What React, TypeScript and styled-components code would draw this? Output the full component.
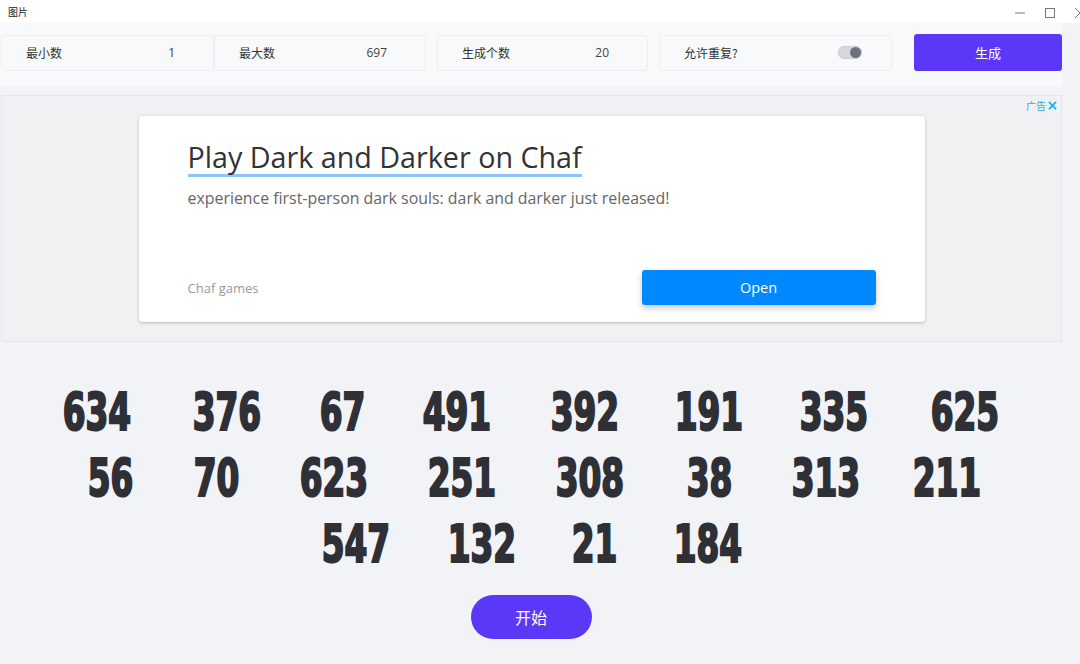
import styled, { createGlobalStyle } from 'styled-components';
import { FunctionComponent } from 'react';

const GlobalStyle = createGlobalStyle`
  html, body {
    margin: 0;
    padding: 0;
    background: #f2f3f7;
    font-family: "Noto Sans CJK SC", "Noto Sans", sans-serif;
  }
`

const TitleBar = styled.div`
  height: 23px;
  background: #fff;
  display: flex;
  align-items: center;
  justify-content: space-between;
  padding-left: 8px;
  font-size: 10px;
  color: #222;
`
const WindowControls = styled.div`
  display: flex;
  align-items: center;
  gap: 18px;
  margin-right: -6px;
  height: 100%;
  align-self: flex-start;
  padding-top: 1px;
`

const Page = styled.div`
  width: 1062px;
`

const Toolbar = styled.div`
  background: #f8f9fb;
  display: flex;
  align-items: center;
  padding: 11px 0 16px 1px;
  gap: 11px;
`
const FieldGroup = styled.div`
  display: flex;
`
const Field = styled.div<{ $width: number }>`
  width: ${p => p.$width}px;
  height: 36px;
  box-sizing: border-box;
  border: 1px solid #eceef2;
  border-radius: 3px;
  background: #f8f9fb;
  display: flex;
  align-items: center;
  justify-content: space-between;
  padding: 0 38px 0 24px;
  font-size: 12px;
  color: #333;
`
const FieldValue = styled.span`
  color: #444;
  font-family: "Open Sans", sans-serif;
`
const Toggle = styled.span`
  width: 22px;
  height: 11px;
  border-radius: 6px;
  background: #d6d8dd;
  border: 1px solid #c9ccd2;
  position: relative;
  margin-right: -9px;
  &::after {
    content: '';
    position: absolute;
    right: 0;
    top: 0;
    width: 11px;
    height: 11px;
    border-radius: 50%;
    background: #6d717c;
  }
`
const GenerateButton = styled.button`
  margin-left: 11px;
  width: 148px;
  height: 37px;
  border: none;
  border-radius: 3px;
  background: #5b37f8;
  color: #fff;
  font-size: 13px;
  font-family: inherit;
`

const AdArea = styled.div`
  margin: 8px 0 0 1px;
  height: 247px;
  box-sizing: border-box;
  background: #f1f1f3;
  border: 1px solid #e5e6ea;
  position: relative;
  padding-top: 20px;
`
const AdMark = styled.div`
  position: absolute;
  right: 4px;
  top: 2px;
  font-size: 10px;
  color: #19b0e0;
  display: flex;
  align-items: center;
  gap: 2px;
`
const AdCard = styled.div`
  width: 786px;
  height: 206px;
  margin: 0 auto;
  background: #fff;
  border-radius: 3px;
  box-shadow: 0 1px 3px rgba(0, 0, 0, 0.25);
  box-sizing: border-box;
  padding: 24px 49px 0 49px;
  font-family: "Open Sans", sans-serif;
  display: flex;
  flex-direction: column;
`
const AdTitle = styled.div`
  font-size: 28.7px;
  color: #333;
  align-self: flex-start;
  border-bottom: 3px solid #8ac4f8;
  line-height: 34px;
`
const AdText = styled.div`
  font-size: 15.9px;
  color: #666;
  margin-top: 10px;
`
const AdFooter = styled.div`
  margin-top: auto;
  margin-bottom: 17px;
  display: flex;
  align-items: center;
  justify-content: space-between;
`
const AdBrand = styled.span`
  font-size: 13px;
  color: #999;
`
const OpenButton = styled.button`
  width: 234px;
  height: 35px;
  border: none;
  border-radius: 3px;
  background: #0088ff;
  color: #fff;
  font-size: 14.5px;
  font-family: "Open Sans", sans-serif;
  box-shadow: 0 3px 6px rgba(0, 0, 0, 0.22);
`

const Results = styled.div`
  padding-top: 37px;
  display: flex;
  flex-direction: column;
  align-items: center;
`
const NumberRow = styled.div`
  display: flex;
  justify-content: center;
  height: 66px;
  line-height: 66px;
`
// condensed heavy digits: a bold face squeezed sideways inside a box of the narrow width
const Num = styled.span<{ $width: number }>`
  width: ${p => p.$width}px;
  margin: 0 31px;
  display: flex;
  justify-content: center;
  font-family: "DejaVu Sans Condensed", "DejaVu Sans", sans-serif;
  font-weight: 700;
  font-size: 52px;
  color: #2f3036;
  -webkit-text-stroke: 2.2px #2f3036;
  white-space: nowrap;
`
const NumInner = styled.span`
  display: inline-block;
  transform: scaleX(0.7);
  transform-origin: center;
`
const StartButton = styled.button`
  margin-top: 18px;
  width: 121px;
  height: 44px;
  border: none;
  border-radius: 22px;
  background: #5b37f8;
  color: #fff;
  font-size: 16px;
  font-family: inherit;
`

const numbers = [634, 376, 67, 491, 392, 191, 335, 625, 56, 70, 623, 251, 308, 38, 313, 211, 547, 132, 21, 184];
const rows = [numbers.slice(0, 8), numbers.slice(8, 16), numbers.slice(16)];

const glyphWidth: Record<string, number> = { '1': 16.5, '7': 19.5 };
const digitWidth = (n: number) =>
  String(n).split('').reduce((w, d) => w + (glyphWidth[d] ?? 23), 0);

const App: FunctionComponent = () => {
  return (
    <>
      <GlobalStyle />
      <TitleBar>
        <span>图片</span>
        <WindowControls>
          <svg width="12" height="12" viewBox="0 0 12 12">
            <line x1="1" y1="6" x2="11" y2="6" stroke="#777" strokeWidth="1" />
          </svg>
          <svg width="12" height="12" viewBox="0 0 12 12">
            <rect x="1.5" y="1.5" width="9" height="9" fill="none" stroke="#777" strokeWidth="1" />
          </svg>
          <svg width="12" height="12" viewBox="0 0 12 12">
            <path d="M1 1 L11 11 M11 1 L1 11" stroke="#777" strokeWidth="1" />
          </svg>
        </WindowControls>
      </TitleBar>
      <Page>
        <Toolbar>
          <FieldGroup>
            <Field $width={213}>最小数<FieldValue>1</FieldValue></Field>
            <Field $width={212}>最大数<FieldValue>697</FieldValue></Field>
          </FieldGroup>
          <Field $width={211}>生成个数<FieldValue>20</FieldValue></Field>
          <Field $width={233}>允许重复?<Toggle /></Field>
          <GenerateButton>生成</GenerateButton>
        </Toolbar>
        <AdArea>
          <AdMark>
            广告
            <svg width="9" height="9" viewBox="0 0 10 10">
              <path d="M1 1 L9 9 M9 1 L1 9" stroke="#19b0e0" strokeWidth="1.8" />
            </svg>
          </AdMark>
          <AdCard>
            <AdTitle>Play Dark and Darker on Chaf</AdTitle>
            <AdText>experience first-person dark souls: dark and darker just released!</AdText>
            <AdFooter>
              <AdBrand>Chaf games</AdBrand>
              <OpenButton>Open</OpenButton>
            </AdFooter>
          </AdCard>
        </AdArea>
        <Results>
          {rows.map((row, i) => (
            <NumberRow key={i}>
              {row.map((n, j) => (
                <Num key={j} $width={digitWidth(n)}>
                  <NumInner>{n}</NumInner>
                </Num>
              ))}
            </NumberRow>
          ))}
          <StartButton>开始</StartButton>
        </Results>
      </Page>
    </>
  );
};

export default App;
